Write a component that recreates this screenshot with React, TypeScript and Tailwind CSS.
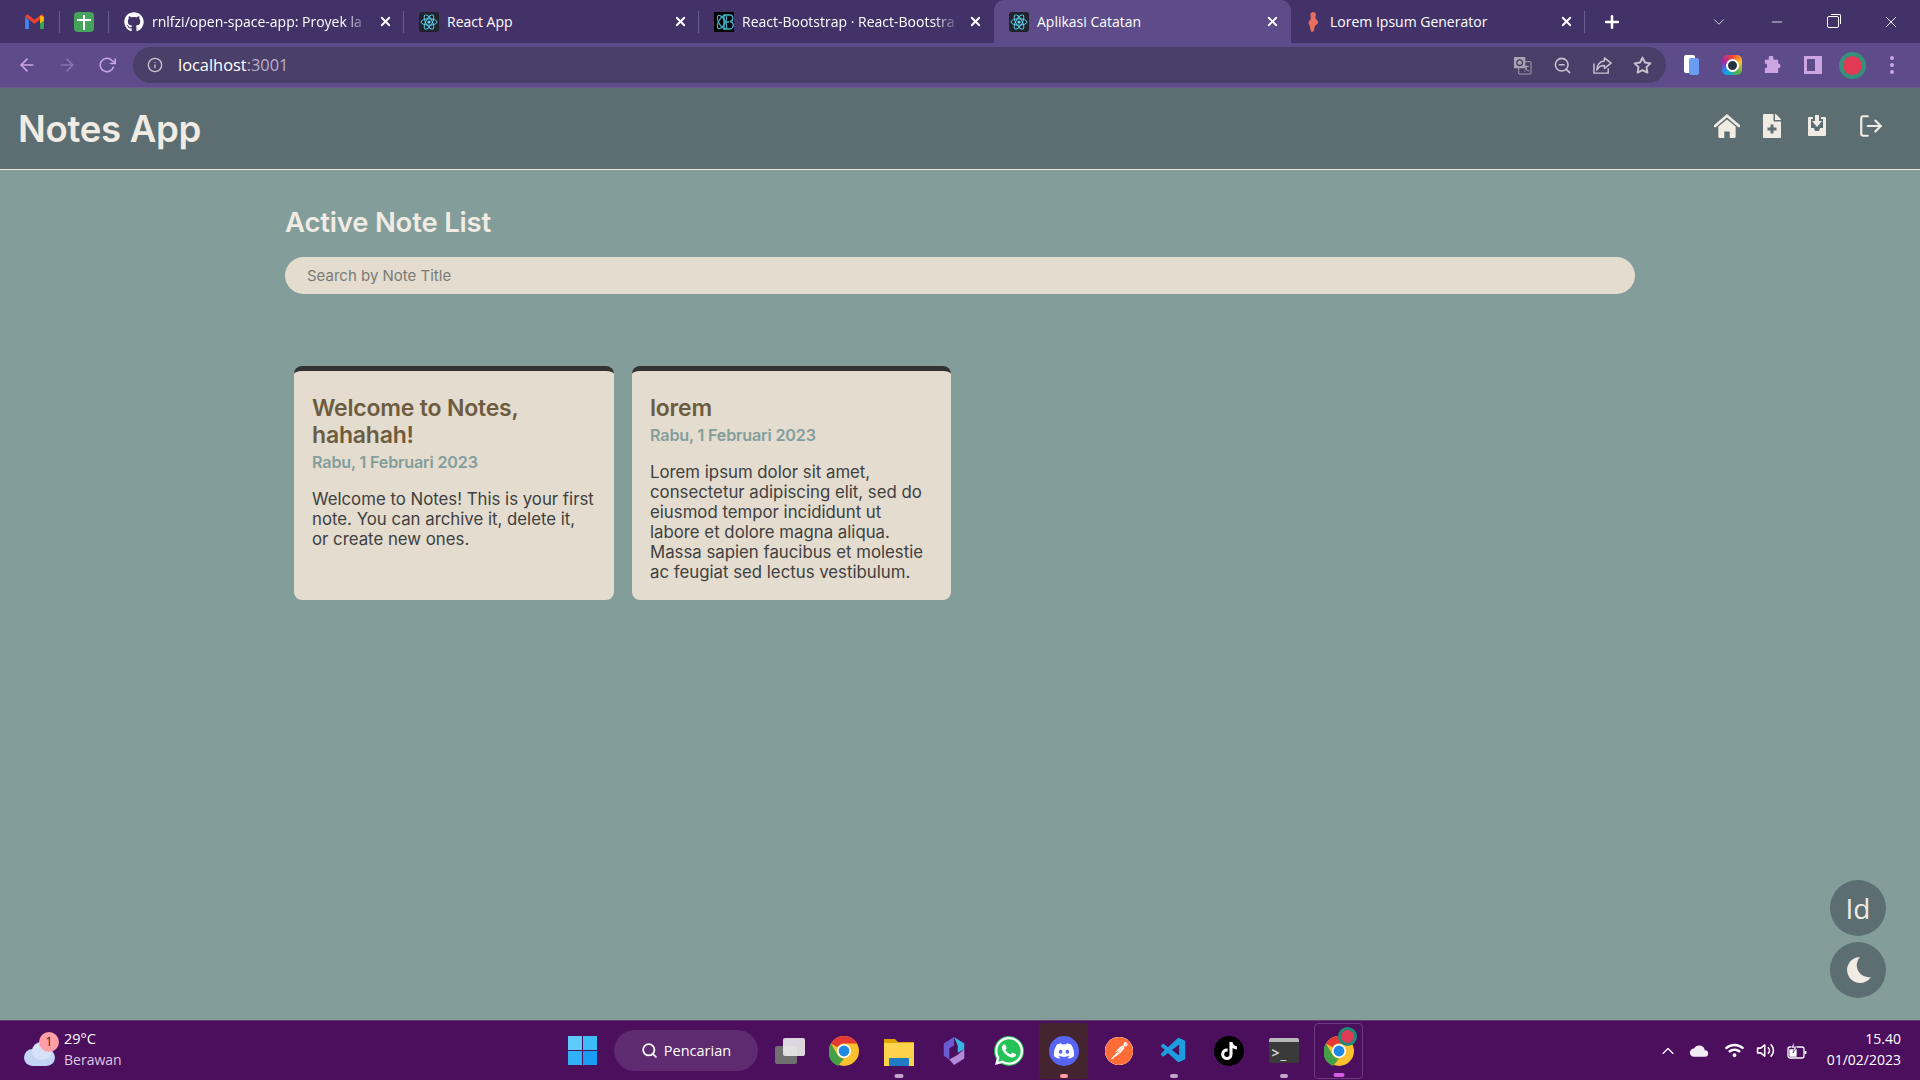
import React from 'react';
import { FaFileMedical, FaGithub, FaWhatsapp, FaDiscord, FaTiktok, FaWifi } from 'react-icons/fa';
import { FiLogOut, FiArrowLeft, FiArrowRight, FiRotateCw, FiInfo, FiZoomOut, FiStar, FiX, FiPlus, FiMinus, FiChevronDown, FiChevronUp, FiSearch, FiVolume2 } from 'react-icons/fi';
import { VscVscode } from 'react-icons/vsc';
import { SiPostman } from 'react-icons/si';

const ReactFav = () => (
    <svg viewBox="0 0 20 20" className="w-5 h-5 shrink-0">
        <rect width="20" height="20" rx="3" fill="#20232a" />
        <g fill="none" stroke="#61dafb" strokeWidth="0.9">
            <ellipse cx="10" cy="10" rx="8" ry="3.2" />
            <ellipse cx="10" cy="10" rx="8" ry="3.2" transform="rotate(60 10 10)" />
            <ellipse cx="10" cy="10" rx="8" ry="3.2" transform="rotate(120 10 10)" />
        </g>
        <circle cx="10" cy="10" r="1.6" fill="#61dafb" />
    </svg>
);

const BootstrapFav = () => (
    <div className="relative w-5 h-5 shrink-0 bg-black">
        <svg viewBox="0 0 20 20" className="w-5 h-5">
            <g fill="none" stroke="#41b4c8" strokeWidth="1.2">
                <ellipse cx="8" cy="10" rx="7.5" ry="3.2" transform="rotate(60 8 10)" />
                <ellipse cx="8" cy="10" rx="7.5" ry="3.2" transform="rotate(120 8 10)" />
                <path d="M10 3h5a3 3 0 0 1 1 6.5 3.3 3.3 0 0 1-1 7.5h-5zM10 10h5" strokeWidth="1.4" />
            </g>
        </svg>
    </div>
);

const Chrome = ({ size = 30 }: { size?: number }) => (
    <svg viewBox="0 0 30 30" width={size} height={size} className="shrink-0">
        <circle cx="15" cy="15" r="15" fill="#fbc02d" />
        <path d="M15 0a15 15 0 0 1 13 7.5H15a7.5 7.5 0 0 0-6.5 3.75L2 7.5A15 15 0 0 1 15 0z" fill="#e53935" />
        <path d="M2 7.5l6.5 11.25A7.5 7.5 0 0 0 15 22.5L9 30A15 15 0 0 1 2 7.5z" fill="#43a047" />
        <circle cx="15" cy="15" r="7" fill="#fff" />
        <circle cx="15" cy="15" r="5.4" fill="#1e88e5" />
    </svg>
);

const Tab = ({ icon, title, w, active, fade, sep = true }: { icon: React.ReactNode; title: string; w: string; active?: boolean; fade?: boolean; sep?: boolean }) => (
    <div className={`${w} relative h-[43px] flex items-center pl-[15px] pr-[11px] gap-[8px] shrink-0 ${active ? 'bg-[#5d4c89] rounded-t-[10px]' : ''}`}>
        {icon}
        <span className={`flex-1 min-w-0 -mt-[1px] text-[14px] text-white whitespace-nowrap overflow-hidden ${fade ? '[mask-image:linear-gradient(to_right,black_88%,transparent)]' : ''}`}>{title}</span>
        <FiX className="w-[15px] h-[15px] text-white shrink-0" strokeWidth={3} />
        {sep && <div className="absolute right-0 top-[11px] w-px h-[22px] bg-[#6b5c8e]" />}
    </div>
);

const BrowserBar = () => (
    <div className="font-['Open_Sans',sans-serif]">
        <div className="h-[43px] bg-[#433268] flex items-center">
            <div className="w-[60px] flex justify-center border-r border-[#6b5c8e] h-[22px] items-center pl-[10px]">
                <svg viewBox="0 0 20 16" className="w-[19px] h-[15px]">
                    <path d="M0 3v13h4V7z" fill="#4285f4" />
                    <path d="M20 3v13h-4V7z" fill="#34a853" />
                    <path d="M0 3l10 7.5L20 3 18 0l-8 6-8-6z" fill="#ea4335" />
                    <path d="M16 1.5L20 3v4l-4 3z" fill="#fbbc04" />
                </svg>
            </div>
            <div className="w-[49px] flex justify-center border-r border-[#6b5c8e] h-[22px] items-center">
                <div className="w-5 h-5 rounded-sm bg-[#46a35c] relative">
                    <div className="absolute left-[9px] top-[3px] w-[2px] h-[15px] bg-white" />
                    <div className="absolute left-[3px] top-[7px] w-[14px] h-[2px] bg-white" />
                </div>
            </div>
            <Tab w="w-[295px]" icon={<FaGithub className="w-5 h-5 text-white shrink-0" />} title="rnlfzi/open-space-app: Proyek la" fade />
            <Tab w="w-[295px]" icon={<ReactFav />} title="React App" />
            <Tab w="w-[295px]" icon={<BootstrapFav />} title="React-Bootstrap · React-Bootstra" fade sep={false} />
            <Tab w="w-[297px]" icon={<ReactFav />} title="Aplikasi Catatan" active sep={false} />
            <Tab w="w-[294px]" icon={<svg viewBox="0 0 12 20" className="w-3 h-5 ml-[1px] mr-[3px] shrink-0"><path d="M6 0c2.5 0 3.5 2 2.5 4.5-.5 1.5 0 2 1.5 3.5 2 2 1 4-1 5-1.500 1-1.500 3-2 5-.5 2.500-3 2.500-3.500 0-.3-2-.3-4-1.500-5.500-1-2 0-4 1.500-5C4 6 3.500 5 3.500 4 3 2 4 0 6 0z" fill="#ea6e60" /></svg>} title="Lorem Ipsum Generator" />
            <FiPlus className="w-[20px] h-[20px] text-white ml-[17px]" strokeWidth={3} />
            <FiChevronDown className="w-[18px] h-[18px] text-[#d9d3e6] ml-[88px]" strokeWidth={1.3} />
            <FiMinus className="w-[16px] h-[16px] text-white ml-[41px]" strokeWidth={1.2} />
            <div className="relative w-[12px] h-[12px] border border-white rounded-[2px] ml-[42px]">
                <div className="absolute -right-[3px] -top-[3px] w-[10px] h-[10px] border-t border-r border-white rounded-tr-[2px]" />
            </div>
            <FiX className="w-[18px] h-[18px] text-white ml-[43px]" strokeWidth={1.2} />
        </div>
        <div className="h-[45px] bg-[#5d4c89] flex items-center border-b border-[#6a5a90]">
            <FiArrowLeft className="w-5 h-5 text-[#cda5e3] ml-[17px]" />
            <FiArrowRight className="w-5 h-5 text-[#8a72ab] ml-[20px]" />
            <FiRotateCw className="w-[18px] h-[18px] text-[#cda5e3] ml-[21px]" />
            <div className="w-[1533px] h-[36px] ml-[17px] rounded-full bg-[#4a3f69] flex items-center">
                <FiInfo className="w-[16px] h-[16px] text-[#c9c5d3] ml-[14px]" />
                <span className="ml-[15px] text-[16.4px] text-white">localhost<span className="text-[#b7b0c9]">:3001</span></span>
                <div className="ml-auto mr-[14px] flex items-center gap-[21px] text-[#c8c4d0]">
                    <svg viewBox="0 0 20 20" className="w-[19px] h-[19px]">
                        <rect x="6" y="6" width="13" height="13" rx="1" fill="none" stroke="#a8a4b2" />
                        <rect x="1" y="1" width="12" height="12" rx="1" fill="#a8a4b2" />
                        <circle cx="7" cy="7" r="3" fill="none" stroke="#4a3f69" strokeWidth="1.400" />
                        <path d="M12 11h5M14.500 10v1c0 2-1 4-2.500 5M13 12c.5 2 2 3.500 4 4" fill="none" stroke="#a8a4b2" strokeWidth="1" />
                    </svg>
                    <FiZoomOut className="w-[19px] h-[19px]" />
                    <svg viewBox="0 0 20 20" className="w-[19px] h-[19px]" fill="none" stroke="currentColor" strokeWidth="1.500">
                        <path d="M1 8v10h15v-5" />
                        <path d="M12 2l7 5.500-7 5.500V10c-4 0-6.500 1.500-8 5 0-6 3-9 8-10z" strokeLinejoin="round" />
                    </svg>
                    <FiStar className="w-[19px] h-[19px]" strokeWidth={2.4} />
                </div>
            </div>
            <div className="ml-[18px] w-[15px] h-[20px] relative">
                <div className="absolute left-0 top-0 w-[11px] h-[18px] bg-white rounded-[2px]" />
                <div className="absolute left-[5px] top-[3px] w-[10px] h-[17px] bg-[#6b9cf4] rounded-[2px]" />
            </div>
            <div className="ml-[23px] w-5 h-5 rounded-[5px] bg-[conic-gradient(#f44336,#fbc02d,#4caf50,#03a9f4,#9c27b0,#f44336)] flex items-center justify-center">
                <div className="w-[13px] h-[13px] rounded-full bg-[#27323f] border-2 border-white" />
            </div>
            <svg viewBox="0 0 20 20" className="w-[19px] h-[19px] ml-[20px]"><path d="M7 2a2.5 2.5 0 0 1 5 0v2h5v4a2.5 2.5 0 0 1 0 5v5H3v-5a2.5 2.5 0 0 0 0-5V4h4z" fill="#cda5e3" /></svg>
            <div className="w-[18px] h-[18px] bg-[#cda5e3] ml-[23px] flex items-center pl-[3px]"><div className="w-[8px] h-[12px] bg-[#5d4c89]" /></div>
            <div className="ml-[17px] w-[27px] h-[27px] rounded-full bg-[#35907c] flex items-center justify-center">
                <div className="w-[19px] h-[19px] rounded-full bg-[#e03a57]" />
            </div>
            <div className="ml-[24px] flex flex-col gap-[3px]">
                <div className="w-[4px] h-[4px] rounded-full bg-[#cda5e3]" />
                <div className="w-[4px] h-[4px] rounded-full bg-[#cda5e3]" />
                <div className="w-[4px] h-[4px] rounded-full bg-[#cda5e3]" />
            </div>
        </div>
    </div>
);

const NoteCard = ({ title, date, body }: { title: React.ReactNode; date: string; body: React.ReactNode }) => (
    <div className="h-[234px] bg-[#e3dccf] rounded-[8px] border-t-[5px] border-[#333333] px-[18px] pt-[24px]">
        <h3 className="text-[23px] leading-[27px] font-semibold text-[#6d5c3f] tracking-[-0.2px]">{title}</h3>
        <p className="text-[16.2px] leading-[26px] font-semibold text-[#849e9b] tracking-[-0.2px]">{date}</p>
        <p className="mt-[14px] text-[16.8px] leading-[20px] text-[#404040]">{body}</p>
    </div>
);

const NotesApp = () => (
    <div className="relative flex-1 bg-[#839d9a] font-['Inter',sans-serif] overflow-hidden">
        <header className="h-[82px] bg-[#5c6e71] border-b border-[#eeeae3] flex items-center pl-[18px] pr-[36px] text-[#f0ebe3]">
            <h1 className="mt-[2px] text-[36.6px] font-semibold tracking-[-0.3px]">Notes App</h1>
            <div className="ml-auto flex items-center -mt-[5px]">
                <svg viewBox="0 0 24 22" className="w-[26px] h-[24px]">
                    <path d="M1 11L12 1.500 23 11" fill="none" stroke="currentColor" strokeWidth="2.400" strokeLinecap="round" />
                    <path d="M4 11.500L12 5l8 6.500V21a1 1 0 0 1-1 1h-4.500v-6h-5v6H5a1 1 0 0 1-1-1z" fill="currentColor" />
                </svg>
                <FaFileMedical className="w-[20px] h-[24px] ml-[22px]" />
                <svg viewBox="0 0 20 22" className="w-[20px] h-[24px] ml-[25px]">
                    <path d="M2 2h4v2H4v9h3l1 3h4l1-3h3V4h-2V2h4a1 1 0 0 1 1 1v17a1 1 0 0 1-1 1H2a1 1 0 0 1-1-1V3a1 1 0 0 1 1-1z" fill="currentColor" />
                    <path d="M8 0h4v6h3l-5 6-5-6h3z" fill="currentColor" />
                </svg>
                <FiLogOut className="w-[26px] h-[26px] ml-[31px]" />
            </div>
        </header>
        <main className="w-[1350px] mx-auto">
            <h2 className="mt-[34px] text-[27.5px] leading-[36px] font-semibold text-[#f0ebe3] tracking-[-0.2px]">Active Note List</h2>
            <div className="mt-[17px] h-[37px] rounded-full bg-[#e3dccf] flex items-center pl-[22px] pt-[1px] text-[15px] text-[#7b7b76]">Search by Note Title</div>
            <div className="mt-[72px] px-[9px] grid grid-cols-[320px_319px] gap-[18px]">
                <NoteCard title="Welcome to Notes, hahahah!" date="Rabu, 1 Februari 2023" body="Welcome to Notes! This is your first note. You can archive it, delete it, or create new ones." />
                <NoteCard title="lorem" date="Rabu, 1 Februari 2023" body="Lorem ipsum dolor sit amet, consectetur adipiscing elit, sed do eiusmod tempor incididunt ut labore et dolore magna aliqua. Massa sapien faucibus et molestie ac feugiat sed lectus vestibulum." />
            </div>
        </main>
        <div className="absolute right-[34px] bottom-[22px] flex flex-col gap-[6px]">
            <button className="w-[56px] h-[56px] rounded-full bg-[#5c6e71] text-[#f0ebe3] text-[28px] font-['Open_Sans',sans-serif]">Id</button>
            <button className="w-[56px] h-[56px] rounded-full bg-[#5c6e71] flex items-center justify-center">
                <svg viewBox="0 0 28 28" className="w-[28px] h-[28px]"><path d="M16 1a13 13 0 1 0 11 20A12 12 0 0 1 16 1z" fill="#f0ebe3" /></svg>
            </button>
        </div>
    </div>
);

const TaskIcon = ({ children, dot, boxed }: { children: React.ReactNode; dot?: string; boxed?: string }) => (
    <div className={`relative w-[49px] h-[56px] rounded-[4px] flex items-center justify-center ${boxed ?? ''}`}>
        {children}
        {dot && <div className={`absolute bottom-[1px] left-1/2 -translate-x-1/2 h-[4px] rounded-full ${dot}`} />}
    </div>
);

const Taskbar = () => (
    <footer className="h-[60px] bg-[#4c0f5e] border-t border-[#633a70] flex items-center text-white font-['Open_Sans',sans-serif] shrink-0">
        <div className="w-[568px] flex items-center pl-[24px] shrink-0">
            <div className="relative w-[32px] h-[30px]">
                <div className="absolute left-0 bottom-0 w-[31px] h-[17px] rounded-full bg-[#c3d5f5]" />
                <div className="absolute left-[8px] bottom-[6px] w-[20px] h-[18px] rounded-full bg-[#d5e2f8]" />
                <div className="absolute left-[15px] -top-[4px] w-[20px] h-[20px] rounded-full bg-[#ff9ea5] text-[#222] text-[12px] flex items-center justify-center">1</div>
            </div>
            <div className="ml-[8px] text-[14px] leading-[21px] -mt-[3px]">
                <div className="text-[14.5px]">29°C</div>
                <div className="text-[#dcc9e2]">Berawan</div>
            </div>
        </div>
        <svg viewBox="0 0 29 29" className="w-[29px] h-[29px] shrink-0">
            <rect x="0" y="0" width="14" height="14" fill="#5fcbfb" />
            <rect x="15" y="0" width="14" height="14" fill="#3dbdf8" />
            <rect x="0" y="15" width="14" height="14" fill="#2fb0f7" />
            <rect x="15" y="15" width="14" height="14" fill="#1a9df5" />
        </svg>
        <div className="ml-[17px] w-[144px] h-[41px] rounded-full bg-[#5e2a70] flex items-center justify-center gap-[6px] text-[14.5px]">
            <FiSearch className="w-[17px] h-[17px]" strokeWidth={2.5} />
            Pencarian
        </div>
        <div className="ml-[17px] relative w-[30px] h-[26px] shrink-0">
            <div className="absolute left-0 bottom-0 w-[22px] h-[18px] bg-[#707070] rounded-[2px]" />
            <div className="absolute right-0 top-0 w-[22px] h-[18px] bg-[#ececec]/90 rounded-[2px]" />
        </div>
        <div className="ml-[14px] flex items-center gap-[6px]">
            <TaskIcon><Chrome /></TaskIcon>
            <TaskIcon dot="w-[9px] bg-[#c4a6cd]">
                <svg viewBox="0 0 30 30" className="w-[30px] h-[30px]">
                    <path d="M0 3h11l3 3h16v24H0z" fill="#e0a500" />
                    <path d="M0 7h30v23H0z" fill="#fdd34d" />
                    <rect x="5" y="22" width="20" height="8" rx="1" fill="#1e7bc4" />
                </svg>
            </TaskIcon>
            <TaskIcon>
                <svg viewBox="0 0 30 30" className="w-[28px] h-[32px]">
                    <path d="M15 0l11 7v6l-7 4V9z" fill="#37b6e6" />
                    <path d="M4 7l11-7v9l-5 3v12l-6-4z" fill="#6a5bd3" />
                    <path d="M26 13v10l-11 7-5-6 9-5z" fill="#b28ad8" />
                </svg>
            </TaskIcon>
            <TaskIcon>
                <div className="relative w-[30px] h-[30px] rounded-full bg-[#25c257]">
                    <FaWhatsapp className="absolute -left-[1px] -top-[1px] w-[32px] h-[32px] text-white" />
                </div>
            </TaskIcon>
            <TaskIcon dot="w-[8px] bg-[#ff9ea5]" boxed="bg-[#44252f]">
                <div className="w-[30px] h-[30px] rounded-full bg-[#5865f2] flex items-center justify-center"><FaDiscord className="w-[22px] h-[22px] text-white" /></div>
            </TaskIcon>
            <TaskIcon>
                <div className="w-[28px] h-[28px] rounded-full bg-[#ff6c37] flex items-center justify-center"><SiPostman className="w-[28px] h-[28px] text-[#ff6c37] bg-white rounded-full" /></div>
            </TaskIcon>
            <TaskIcon dot="w-[8px] bg-[#c4a6cd]"><VscVscode className="w-[30px] h-[30px] text-[#1e9ee0]" /></TaskIcon>
            <TaskIcon>
                <div className="w-[30px] h-[30px] rounded-full bg-black flex items-center justify-center"><FaTiktok className="w-[18px] h-[18px] text-white" /></div>
            </TaskIcon>
            <TaskIcon dot="w-[8px] bg-[#c4a6cd]">
                <div className="w-[30px] h-[25px] rounded-[2px] bg-[#3a3a3a] border-t-[4px] border-[#b8b8b8] flex items-center pl-[3px] gap-[1px] text-[14px] text-[#d0d0d0] font-bold leading-none">&gt;<span className="mt-[2px]">_</span></div>
            </TaskIcon>
            <TaskIcon dot="w-[11px] bg-[#d75ce0]" boxed="border border-[#6a3a7c]">
                <Chrome />
                <div className="absolute right-[5px] top-[3px] w-[19px] h-[19px] rounded-full bg-[#e03a57] border-[3px] border-[#1f8a78]" />
            </TaskIcon>
        </div>
        <div className="ml-auto flex items-center gap-[12px] pr-[19px]">
            <FiChevronUp className="w-[20px] h-[20px] mr-[-3px]" strokeWidth={1.400} />
            <svg viewBox="0 0 24 14" className="w-[20px] h-[12px] ml-[2px]"><path d="M6 14a5 5 0 0 1 0-10 7 7 0 0 1 13 2 4 4 0 0 1 0 8z" fill="#f3ecf5" /></svg>
            <FaWifi className="w-[19px] h-[19px] ml-[4px]" />
            <FiVolume2 className="w-[19px] h-[19px]" />
            <svg viewBox="0 0 20 18" className="w-[20px] h-[18px]" fill="none" stroke="#fff" strokeWidth="1.300">
                <rect x="1" y="5" width="16" height="11" rx="2" />
                <path d="M18.500 9v3" strokeWidth="1.800" />
                <path d="M3 14V8h6v6z" fill="#fff" />
                <path d="M7 0L4 6h3l-1 5 4-6H7z" fill="#fff" stroke="#4c0f5e" strokeWidth="0.600" />
            </svg>
            <div className="ml-[8px] text-right text-[14px] leading-[21px] -mt-[3px]">
                <div>15.40</div>
                <div>01/02/2023</div>
            </div>
        </div>
    </footer>
);

export default function App() {
    return (
        <div className="w-[1920px] h-[1080px] flex flex-col overflow-hidden">
            <BrowserBar />
            <NotesApp />
            <Taskbar />
        </div>
    );
}
